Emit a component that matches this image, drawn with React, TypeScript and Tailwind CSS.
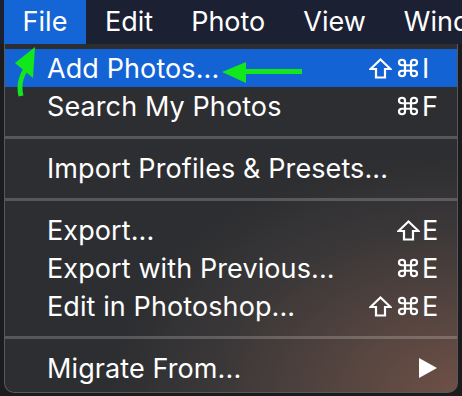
import React from "react";

type Item = {
    label: string;
    mods?: ("shift" | "cmd")[];
    keyChar?: string;
    submenu?: boolean;
    active?: boolean;
};

const groups: Item[][] = [
    [
        { label: "Add Photos...", mods: ["shift", "cmd"], keyChar: "I", active: true },
        { label: "Search My Photos", mods: ["cmd"], keyChar: "F" },
    ],
    [{ label: "Import Profiles & Presets..." }],
    [
        { label: "Export...", mods: ["shift"], keyChar: "E" },
        { label: "Export with Previous...", mods: ["cmd"], keyChar: "E" },
        { label: "Edit in Photoshop...", mods: ["shift", "cmd"], keyChar: "E" },
    ],
    [{ label: "Migrate From...", submenu: true }],
];

const font = { fontFamily: "Inter, 'DejaVu Sans', sans-serif" };

function ShiftIcon() {
    return (
        <svg width="23" height="21" viewBox="0 0 23 21">
            <path d="M11.5 1.5 L21.5 11 L16 11 L16 19.5 L7 19.5 L7 11 L1.5 11 Z" stroke="white" strokeWidth="2.2" strokeLinejoin="miter" fill="none" />
        </svg>
    );
}

function CmdIcon() {
    return (
        <svg width="24" height="22" viewBox="0 0 24 24" preserveAspectRatio="none">
            <path d="M15 6v12a3 3 0 1 0 3-3H6a3 3 0 1 0 3 3V6a3 3 0 1 0-3 3h12a3 3 0 1 0-3-3" stroke="white" strokeWidth="2.2" fill="none" />
        </svg>
    );
}

function Row({ item }: { item: Item }) {
    return (
        <div
            className={
                "flex items-center h-[38px] pl-[42px] pr-[20px] text-white text-[27px] tracking-[0.1px] " +
                (item.active ? "bg-[#1463d5]" : "")
            }
        >
            <span className="flex-1 leading-none">{item.label}</span>
            {item.keyChar ? (
                <span className="flex items-center leading-none">
                    <span className="flex items-center gap-[4px]">
                        {item.mods?.map((m, i) => (m == "shift" ? <ShiftIcon key={i} /> : <CmdIcon key={i} />))}
                    </span>
                    <span className="w-[17px] pl-[2px]">{item.keyChar}</span>
                </span>
            ) : null}
            {item.submenu ? (
                <svg width="18" height="20" viewBox="0 0 18 20">
                    <polygon points="0,0 18,10 0,20" fill="white" />
                </svg>
            ) : null}
        </div>
    );
}

export default function App() {
    return (
        <div className="relative w-[462px] h-[396px] overflow-hidden bg-[#1c1c1e]" style={font}>
            {/* menu bar */}
            <div className="flex h-[44px] bg-[#1b2133] text-white text-[27px] pl-[4px] whitespace-nowrap">
                <div className="shrink-0 bg-[#1466d6] w-[82px] flex items-center justify-center">File</div>
                <div className="flex items-center pl-[19px] gap-[38px]">
                    <span>Edit</span>
                    <span>Photo</span>
                    <span>View</span>
                    <span>Wind</span>
                </div>
            </div>

            {/* dropdown */}
            <div className="mx-[4px] w-[454px] h-[349px] rounded-b-[10px] border-x border-b border-[#58585a] pt-[5px] bg-[radial-gradient(ellipse_90%_80%_at_100%_100%,#6e5046_0%,#54443f_30%,#3a3738_60%,#2d2e31_85%)]">
                {groups.map((g, gi) => (
                    <div key={gi}>
                        {gi > 0 ? (
                            <div className="h-[24px] flex items-center">
                                <div className="h-[3px] w-full bg-[#ffffff]/20" />
                            </div>
                        ) : null}
                        {g.map((it) => (
                            <Row key={it.label} item={it} />
                        ))}
                    </div>
                ))}
            </div>

            {/* green annotation arrows */}
            <svg className="absolute left-0 top-0" width="462" height="396" viewBox="0 0 462 396">
                <path d="M21 96 C 18 84, 22 72, 31 63" stroke="#12e61c" strokeWidth="5" fill="none" />
                <polygon points="15,63 35,47 33,78" fill="#12e61c" />
                <rect x="240" y="69" width="62" height="5" fill="#12e61c" />
                <polygon points="222,72 246,62 246,83" fill="#12e61c" />
            </svg>
        </div>
    );
}
